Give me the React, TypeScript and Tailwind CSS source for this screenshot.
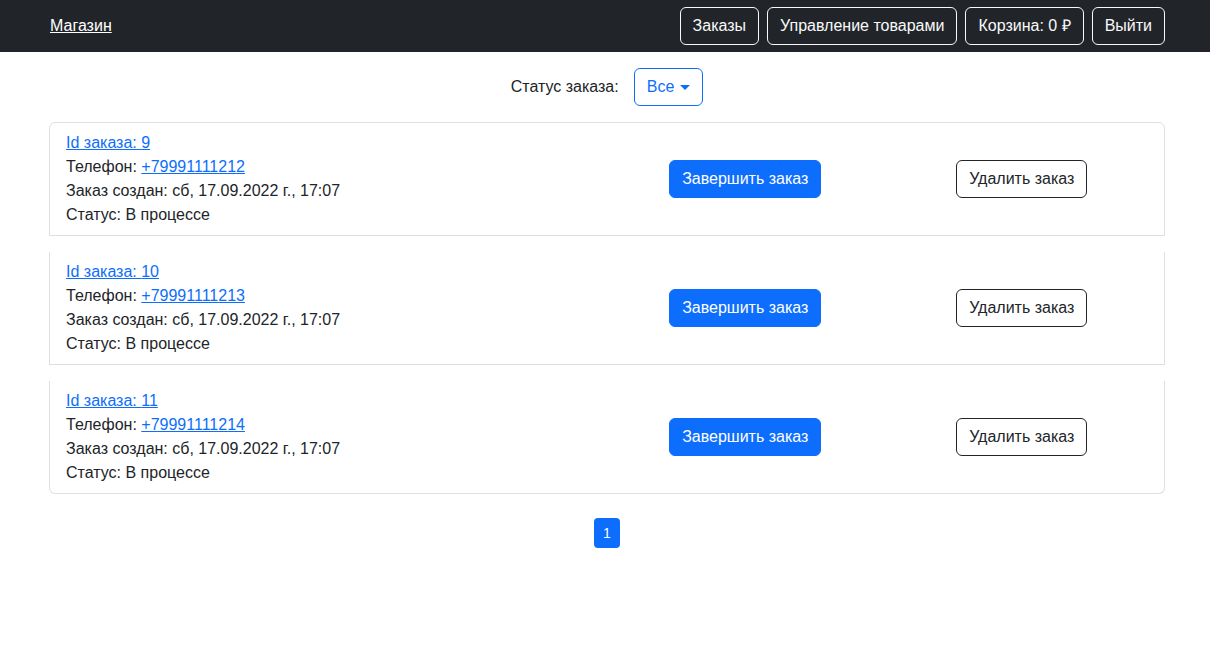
import React from 'react'

const orders = [
  { id: 9, phone: '+79991111212' },
  { id: 10, phone: '+79991111213' },
  { id: 11, phone: '+79991111214' },
]

const navButton =
  'h-[38px] px-3 rounded-md border border-[#f8f9fa] text-[#f8f9fa] text-base leading-6 whitespace-nowrap'

const OrderItem: React.FC<{ id: number; phone: string; index: number; total: number }> = ({
  id,
  phone,
  index,
  total,
}) => {
  const first = index === 0
  const last = index === total - 1
  return (
    <div
      className={
        'flex items-center border-x border-b border-[#dfdfdf] px-1 py-2 ' +
        (first ? 'border-t rounded-t-md ' : '') +
        (last ? 'rounded-b-md ' : 'mb-4 ')
      }
    >
      {/* Инфо о заказе */}
      <div className="w-1/2 px-3 leading-6">
        <div>
          <a href="#" className="text-[#0d6efd] underline">
            Id заказа: {id}
          </a>
        </div>
        <div>
          Телефон:{' '}
          <a href="#" className="text-[#0d6efd] underline">
            {phone}
          </a>
        </div>
        <div>Заказ создан: сб, 17.09.2022 г., 17:07</div>
        <div>Статус: В процессе</div>
      </div>
      <div className="w-1/4 px-3 flex justify-center">
        <button className="h-[38px] px-3 rounded-md bg-[#0d6efd] text-white border border-[#0d6efd]">
          Завершить заказ
        </button>
      </div>
      <div className="w-1/4 px-3 flex justify-center">
        <button className="h-[38px] px-3 rounded-md border border-[#212529] text-[#212529]">
          Удалить заказ
        </button>
      </div>
    </div>
  )
}

export default function App() {
  return (
    <div
      className="min-h-[662px] bg-white text-[#212529] text-base"
      style={{ fontFamily: '"Liberation Sans", Arial, sans-serif' }}
    >
      <header className="bg-[#212529] h-[52px]">
        <div className="ml-[49px] mr-[45px] h-full flex items-center justify-between">
          <a href="#" className="text-white underline pl-px">
            Магазин
          </a>
          <div className="flex items-center gap-2">
            <button className={navButton}>Заказы</button>
            <button className={navButton}>Управление товарами</button>
            <button className={navButton}>Корзина: 0 ₽</button>
            <button className={navButton}>Выйти</button>
          </div>
        </div>
      </header>

      <main className="ml-[49px] mr-[45px]">
        {/* Фильтр */}
        <div className="flex items-center justify-center gap-[15px] mt-4 mb-4">
          <span>Статус заказа:</span>
          <button className="h-[38px] px-3 rounded-md border border-[#0d6efd] text-[#0d6efd] flex items-center gap-[6px]">
            Все
            <span className="w-0 h-0 border-x-[5px] border-x-transparent border-t-[5px] border-t-[#0d6efd]" />
          </button>
        </div>

        <div>
          {orders.map((o, i) => (
            <OrderItem key={o.id} id={o.id} phone={o.phone} index={i} total={orders.length} />
          ))}
        </div>

        <div className="flex justify-center mt-6">
          <span className="w-[26px] h-[30px] rounded bg-[#0d6efd] text-white text-sm flex items-center justify-center">
            1
          </span>
        </div>
      </main>
    </div>
  )
}
